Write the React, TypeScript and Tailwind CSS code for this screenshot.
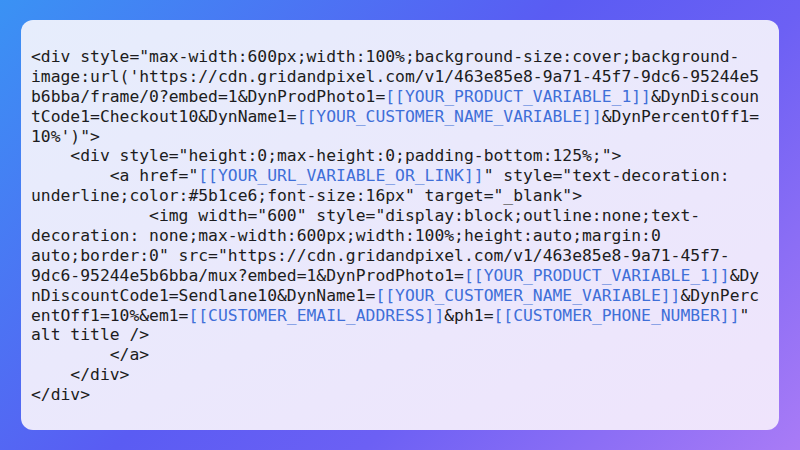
const LINES = [
  `<div style="max-width:600px;width:100%;background-size:cover;background-`,
  `image:url('https://cdn.gridandpixel.com/v1/463e85e8-9a71-45f7-9dc6-95244e5`,
  `b6bba/frame/0?embed=1&DynProdPhoto1=[[YOUR_PRODUCT_VARIABLE_1]]&DynDiscoun`,
  `tCode1=Checkout10&DynName1=[[YOUR_CUSTOMER_NAME_VARIABLE]]&DynPercentOff1=`,
  `10%')">`,
  `    <div style="height:0;max-height:0;padding-bottom:125%;">`,
  `        <a href="[[YOUR_URL_VARIABLE_OR_LINK]]" style="text-decoration:`,
  `underline;color:#5b1ce6;font-size:16px" target="_blank">`,
  `            <img width="600" style="display:block;outline:none;text-`,
  `decoration: none;max-width:600px;width:100%;height:auto;margin:0`,
  `auto;border:0" src="https://cdn.gridandpixel.com/v1/463e85e8-9a71-45f7-`,
  `9dc6-95244e5b6bba/mux?embed=1&DynProdPhoto1=[[YOUR_PRODUCT_VARIABLE_1]]&Dy`,
  `nDiscountCode1=Sendlane10&DynName1=[[YOUR_CUSTOMER_NAME_VARIABLE]]&DynPerc`,
  `entOff1=10%&em1=[[CUSTOMER_EMAIL_ADDRESS]]&ph1=[[CUSTOMER_PHONE_NUMBER]]"`,
  `alt title />`,
  `        </a>`,
  `    </div>`,
  `</div>`,
];

const CodeLine = ({ text }: { text: string }) => {
  const parts = text.split(/(\[\[[^\]]+\]\])/);
  return (
    <div className="h-[19.9px] whitespace-pre">
      {parts.map((p, i) =>
        p.startsWith("[[") ? (
          <span key={i} className="text-[#3f6fd8]">
            {p}
          </span>
        ) : (
          <span key={i}>{p}</span>
        )
      )}
    </div>
  );
};

export default function App() {
  return (
    <div className="w-[800px] h-[450px] px-[21px] pt-[20px] pb-[20px] bg-[linear-gradient(135deg,#3a92f4_0%,#5a5cf3_45%,#6c60f4_65%,#a97bf6_100%)]">
      <div className="h-[410px] rounded-[12px] bg-gradient-to-br from-[#e6edfc] to-[#efe4fc] pl-[10px] pt-[27px]">
        <div className="font-['DejaVu_Sans_Mono',monospace] text-[16.35px] leading-[19.9px] text-[#1c1c20]">
          {LINES.map((l, i) => (
            <CodeLine key={i} text={l} />
          ))}
        </div>
      </div>
    </div>
  );
}
